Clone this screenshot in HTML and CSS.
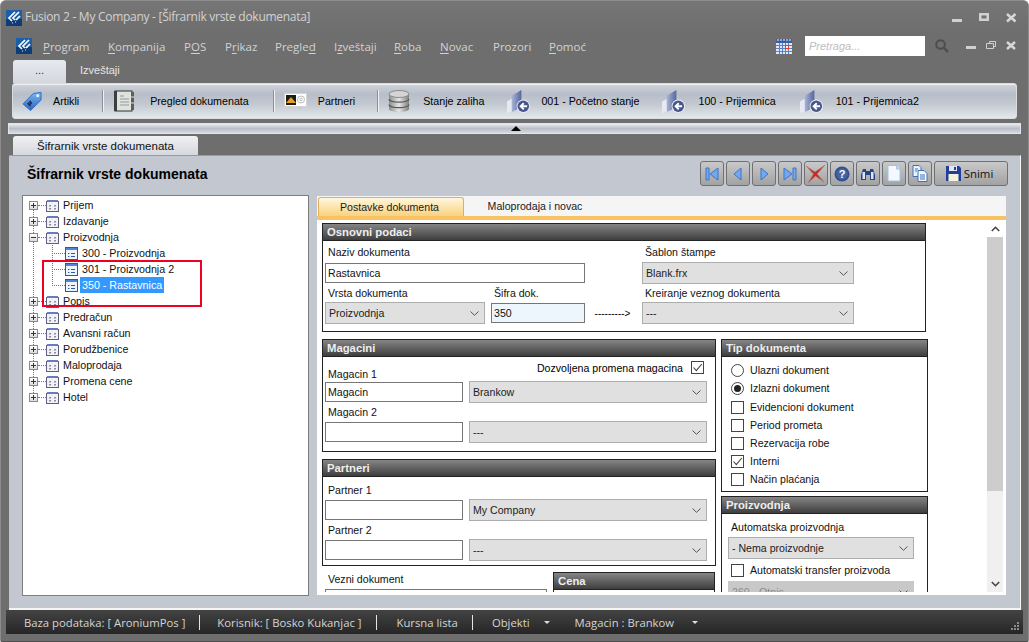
FILE: index.html
```html
<!DOCTYPE html>
<html lang="sr">
<head>
<meta charset="utf-8">
<title>Fusion 2</title>
<link rel="stylesheet" href="styles.css">
</head>
<body>
<svg class="defs" width="0" height="0" aria-hidden="true">
  <defs>
    <linearGradient id="gBlue" x1="0" y1="0" x2="0" y2="1"><stop offset="0" stop-color="#7db4ef"/><stop offset="1" stop-color="#2c66c0"/></linearGradient>
    <linearGradient id="gFold" x1="0" y1="0" x2="1" y2="0"><stop offset="0" stop-color="#a9b3d6"/><stop offset="1" stop-color="#56669c"/></linearGradient>
    <linearGradient id="gDb" x1="0" y1="0" x2="1" y2="0"><stop offset="0" stop-color="#8d8d8d"/><stop offset=".5" stop-color="#e6e6e6"/><stop offset="1" stop-color="#7d7d7d"/></linearGradient>
    <symbol id="logo" viewBox="0 0 16 16">
      <rect width="16" height="16" fill="#1c5fa8"/><rect y="9" width="16" height="7" fill="#0d3c78"/>
      <path d="M9 2 3 8l3 3M13 2 7 8l2 2M14 6l-4 4" fill="none" stroke="#fff" stroke-width="1.7"/>
      <path d="M6 13h1M9 12h1M11 9h1" stroke="#dfeaf7" stroke-width="1.2"/>
    </symbol>
    <symbol id="folder" viewBox="0 0 24 26">
      <path d="M0 13 5 10V24L0 25Z" fill="#e6e9f2"/><path d="M5 7 15 1V19L5 24Z" fill="url(#gFold)"/>
      <circle cx="17" cy="18" r="7" fill="#e8ebf3"/><circle cx="17" cy="18" r="6" fill="#47568c"/>
      <path d="M21 18h-6M17.500 14.800 14.200 18l3.300 3.200" fill="none" stroke="#fff" stroke-width="2"/>
    </symbol>
    <symbol id="treefolder" viewBox="0 0 13 13">
      <rect x=".5" y="2.500" width="12" height="10" fill="#f1f2f6" stroke="#5c5f80"/>
      <path d="M1 1h11v2H1z" fill="#6a7cc0"/>
      <path d="M3 6h2v1.400H3zM8 6h2v1.400H8zM3 9h2v1.400H3zM8 9h2v1.400H8z" fill="#8b8ea6"/>
    </symbol>
    <symbol id="treedoc" viewBox="0 0 13 13">
      <rect x=".5" y=".5" width="12" height="12" fill="#eef4fc" stroke="#2a59a8"/>
      <path d="M1 1h11v2H1z" fill="#4f86d4"/>
      <path d="M3 6h1.400v1H3zM3 9h1.400v1H3zM6 6h4v1H6zM6 9h4v1H6z" fill="#2a59a8"/>
    </symbol>
    <symbol id="chev" viewBox="0 0 9 5"><path d="M.5.5 4.500 4.300 8.500.5" fill="none" stroke="#555" stroke-width="1"/></symbol>
    <symbol id="tick" viewBox="0 0 13 13"><path d="M2.500 6.500 5.300 9.600 10.800 3" fill="none" stroke="#444" stroke-width="1.100"/></symbol>
  </defs>
</svg>

<div class="window">
  <header class="titlebar">
    <svg class="logo"><use href="#logo"/></svg>
    <span class="title-text">Fusion 2 - My Company - [Šifrarnik vrste dokumenata]</span>
    <div class="winbtns">
      <svg width="11" height="10" viewBox="0 0 11 10"><rect x="0" y="6" width="10" height="3" fill="#d0d0d0"/></svg>
      <svg width="11" height="10" viewBox="0 0 11 10"><path d="M0 0h10v8H0zM2.500 2.500v3h5v-3z" fill="#d0d0d0" fill-rule="evenodd"/></svg>
      <svg width="11" height="10" viewBox="0 0 11 10"><path d="M1 1 9.500 8.500M9.500 1 1 8.500" stroke="#d8d8d8" stroke-width="2.400"/></svg>
    </div>
  </header>

  <nav class="menubar">
    <svg class="logo"><use href="#logo"/></svg>
    <span class="m m-program"><u>P</u>rogram</span>
    <span class="m m-komp"><u>K</u>ompanija</span>
    <span class="m m-pos">P<u>O</u>S</span>
    <span class="m m-prikaz">P<u>r</u>ikaz</span>
    <span class="m m-pregled">Pregle<u>d</u></span>
    <span class="m m-izv">I<u>z</u>veštaji</span>
    <span class="m m-roba"><u>R</u>oba</span>
    <span class="m m-novac"><u>N</u>ovac</span>
    <span class="m m-prozori">Prozori</span>
    <span class="m m-pomoc"><u>P</u>omoć</span>
    <svg class="calendar" width="16" height="15" viewBox="0 0 16 15">
      <rect x="0" y="1" width="16" height="14" fill="#dfe8f8"/>
      <rect x="0" y="0" width="16" height="4" fill="#3c5ea8"/>
      <path d="M2 0v2M5 0v2M8 0v2M11 0v2M14 0v2" stroke="#e8eefa"/>
      <path d="M0 6.500h16M0 9.500h16M0 12.500h16M3.500 4v11M6.500 4v11M9.500 4v11M12.500 4v11" stroke="#5d7fc4"/>
      <rect x="9.500" y="6.500" width="3" height="3" fill="#fff" stroke="#e0401c"/>
    </svg>
    <div class="search">Pretraga...</div>
    <svg class="searchico" width="14" height="14" viewBox="0 0 14 14"><circle cx="5.500" cy="5.500" r="4.300" fill="none" stroke="#4d4d4d" stroke-width="2"/><path d="M9 9 13 13" stroke="#4d4d4d" stroke-width="2.400"/></svg>
    <div class="mdibtns">
      <svg width="10" height="10" viewBox="0 0 10 10"><rect x="0" y="5" width="10" height="3" fill="#d0d0d0"/></svg>
      <svg width="10" height="10" viewBox="0 0 10 10"><path d="M3.500 2.500V.5h6v5h-2M.5 2.500h7v5h-7z" fill="none" stroke="#d0d0d0"/></svg>
      <svg width="10" height="10" viewBox="0 0 10 10"><path d="M1 1 9 8M9 1 1 8" stroke="#d8d8d8" stroke-width="2.400"/></svg>
    </div>
  </nav>

  <div class="ribbontabs">
    <div class="rtab">...</div>
    <div class="rtab-plain">Izveštaji</div>
  </div>

  <div class="toolbar">
    <div class="ti ti-a">
      <svg width="20" height="21" viewBox="0 0 21 21"><path d="M1 13 12 2 20 1 20 9 9 20Z" fill="url(#gBlue)" stroke="#2f6ac4" stroke-linejoin="round"/><circle cx="16.500" cy="4.500" r="1.500" fill="#dff"/><path d="M6 12l3 3M8 10l2 3" stroke="#17305e" stroke-width="2"/></svg>
      <span>Artikli</span>
    </div>
    <i class="sep"></i>
    <div class="ti ti-b">
      <svg width="22" height="22" viewBox="0 0 22 22"><rect x="2" y="1" width="17" height="20" fill="#dfe3dd" stroke="#333"/><rect x="1" y="1" width="3" height="20" fill="#3e3e3e"/><path d="M7 6h4M7 9h9M7 12h9M7 15h9" stroke="#999"/><rect x="18" y="2" width="3" height="18" fill="#5e5e5e"/><path d="M18 7h3M18 13h3" stroke="#ddd"/></svg>
      <span>Pregled dokumenata</span>
    </div>
    <i class="sep"></i>
    <div class="ti ti-c">
      <svg width="23" height="18" viewBox="0 0 23 18"><rect x=".5" y="1.500" width="22" height="13" fill="#fff" stroke="#d5d5d5"/><rect x="2" y="3" width="10" height="10" fill="#1c1c1c"/><path d="M2 11 7 5 12 11Z" fill="#e8a020"/><rect x="4" y="14" width="3" height="3" fill="#ccc"/><rect x="15" y="14" width="3" height="3" fill="#ccc"/><circle cx="17" cy="7.500" r="3.500" fill="none" stroke="#bcbcbc"/><circle cx="17" cy="7.500" r="1.300" fill="none" stroke="#bcbcbc"/></svg>
      <span>Partneri</span>
    </div>
    <i class="sep"></i>
    <div class="ti ti-d">
      <svg width="22" height="22" viewBox="0 0 22 22"><path d="M1 4v15c0 1.600 4.500 3 10 3s10-1.400 10-3V4Z" fill="url(#gDb)"/><ellipse cx="11" cy="4" rx="10" ry="3.500" fill="#d4d4d4" stroke="#8a8a8a"/><path d="M1 9c0 1.800 4.500 3.200 10 3.200S21 10.800 21 9M1 14.500c0 1.800 4.500 3.200 10 3.200s10-1.400 10-3.200" fill="none" stroke="#555" stroke-width="1.200"/></svg>
      <span>Stanje zaliha</span>
    </div>
    <div class="ti ti-e"><svg width="23" height="25"><use href="#folder"/></svg><span>001 - Početno stanje</span></div>
    <div class="ti ti-f"><svg width="23" height="25"><use href="#folder"/></svg><span>100 - Prijemnica</span></div>
    <div class="ti ti-g"><svg width="23" height="25"><use href="#folder"/></svg><span>101 - Prijemnica2</span></div>
  </div>

  <div class="splitter"><i class="tri"></i></div>

  <div class="doctabs"><div class="doctab">Šifrarnik vrste dokumenata</div></div>

  <main class="panel">
    <div class="panelhead">
      <h1>Šifrarnik vrste dokumenata</h1>
      <div class="actions">
        <button class="ab"><svg width="16" height="16" viewBox="0 0 16 16"><path d="M2 2h3v12H2zM14 2v12L6 8Z" fill="#74a8ee" stroke="#3a74cc"/></svg></button>
        <button class="ab"><svg width="16" height="16" viewBox="0 0 16 16"><path d="M11 2v12L4 8Z" fill="#74a8ee" stroke="#3a74cc"/></svg></button>
        <button class="ab"><svg width="16" height="16" viewBox="0 0 16 16"><path d="M5 2v12l7-6Z" fill="#74a8ee" stroke="#3a74cc"/></svg></button>
        <button class="ab"><svg width="16" height="16" viewBox="0 0 16 16"><path d="M11 2h3v12h-3zM2 2v12l8-6Z" fill="#74a8ee" stroke="#3a74cc"/></svg></button>
        <button class="ab"><svg width="22" height="20" viewBox="0 0 22 20"><path d="M1 2 10 8 20 1 12 10 19 18 10.500 12 3 19 8.500 10Z" fill="#c9281e" stroke="#a9786e" stroke-width=".6"/></svg></button>
        <button class="ab"><svg width="16" height="16" viewBox="0 0 16 16"><circle cx="8" cy="8" r="7.500" fill="#2f4f8f"/><circle cx="8" cy="8" r="5.800" fill="#45639f"/><text x="8" y="12" text-anchor="middle" class="qmark">?</text></svg></button>
        <button class="ab"><svg width="16" height="16" viewBox="0 0 16 16"><path d="M1 9 3 3h3v11H1ZM15 9 13 3h-3v11h5Z" fill="#28437f"/><path d="M6 5h4v4H6z" fill="#28437f"/><path d="M2.500 6h2.500v7H2.500ZM11 6h2.500v7H11Z" fill="#dbe8fa"/></svg></button>
        <button class="ab"><svg width="14" height="17" viewBox="0 0 14 17"><path d="M1 .5h8.500L13 4v12H1Z" fill="#f5f9ff" stroke="#9cc3ee"/><path d="M9.500.5V4H13" fill="#cfe2f8" stroke="#9cc3ee"/></svg></button>
        <button class="ab"><svg width="16" height="17" viewBox="0 0 16 17"><path d="M1 .5h6l2 2v9H1Z" fill="#e9f2fd" stroke="#3f70b8"/><path d="M6 5.500h6l3 3v8H6Z" fill="#f4f8fe" stroke="#3f70b8"/><path d="M8 10h5M8 12h5M8 14h5M3 4h3M3 6h2" stroke="#3f70b8"/></svg></button>
        <button class="ab ab-save"><svg width="15" height="15" viewBox="0 0 15 15"><path d="M0 0h13l2 2v13H0Z" fill="#1f3f9a"/><rect x="3" y="0" width="8" height="5" fill="#e6e6f2"/><rect x="8" y="1" width="2" height="3" fill="#1f3f9a"/><rect x="2.500" y="8" width="10" height="7" fill="#f7f3d8"/></svg><span>Snimi</span></button>
      </div>
    </div>

    <div class="panelbody">
      <div class="tree">
        <i class="vline v-main"></i>
        <i class="vline v-child"></i>
        <div class="tr"><i class="exp plus"></i><i class="dots"></i><svg class="tico"><use href="#treefolder"/></svg><span>Prijem</span></div>
        <div class="tr"><i class="exp plus"></i><i class="dots"></i><svg class="tico"><use href="#treefolder"/></svg><span>Izdavanje</span></div>
        <div class="tr"><i class="exp"></i><i class="dots"></i><svg class="tico"><use href="#treefolder"/></svg><span>Proizvodnja</span></div>
        <div class="tr child"><i class="dots"></i><svg class="tico"><use href="#treedoc"/></svg><span>300 - Proizvodnja</span></div>
        <div class="tr child"><i class="dots"></i><svg class="tico"><use href="#treedoc"/></svg><span>301 - Proizvodnja 2</span></div>
        <div class="tr child"><i class="dots"></i><svg class="tico"><use href="#treedoc"/></svg><span class="selected">350 - Rastavnica</span></div>
        <div class="tr"><i class="exp plus"></i><i class="dots"></i><svg class="tico"><use href="#treefolder"/></svg><span>Popis</span></div>
        <div class="tr"><i class="exp plus"></i><i class="dots"></i><svg class="tico"><use href="#treefolder"/></svg><span>Predračun</span></div>
        <div class="tr"><i class="exp plus"></i><i class="dots"></i><svg class="tico"><use href="#treefolder"/></svg><span>Avansni račun</span></div>
        <div class="tr"><i class="exp plus"></i><i class="dots"></i><svg class="tico"><use href="#treefolder"/></svg><span>Porudžbenice</span></div>
        <div class="tr"><i class="exp plus"></i><i class="dots"></i><svg class="tico"><use href="#treefolder"/></svg><span>Maloprodaja</span></div>
        <div class="tr"><i class="exp plus"></i><i class="dots"></i><svg class="tico"><use href="#treefolder"/></svg><span>Promena cene</span></div>
        <div class="tr"><i class="exp plus"></i><i class="dots"></i><svg class="tico"><use href="#treefolder"/></svg><span>Hotel</span></div>
        <div class="redbox"></div>
      </div>

      <section class="editor">
        <div class="etabs">
          <div class="etab active">Postavke dokumenta</div>
          <div class="etab">Maloprodaja i novac</div>
        </div>
        <div class="econtent">
          <div class="form">
            <div class="group g-osnovni">
              <div class="ghead">Osnovni podaci</div>
              <div class="osn-grid">
                <label class="lab span3">Naziv dokumenta</label>
                <label class="lab c5">Šablon štampe</label>
                <div class="field span3 w260">Rastavnica</div>
                <div class="sel c5">Blank.frx<svg class="chev"><use href="#chev"/></svg></div>
                <label class="lab">Vrsta dokumenta</label>
                <label class="lab c3">Šifra dok.</label>
                <label class="lab c5">Kreiranje veznog dokumenta</label>
                <div class="sel">Proizvodnja<svg class="chev"><use href="#chev"/></svg></div>
                <div class="field c3 tint">350</div>
                <div class="arrow c4">---------&gt;</div>
                <div class="sel c5">---<svg class="chev"><use href="#chev"/></svg></div>
              </div>
            </div>

            <div class="cols">
              <div class="col-left">
                <div class="group g-mag">
                  <div class="ghead">Magacini</div>
                  <div class="pair-grid mag-grid">
                    <label class="lab end">Magacin 1</label>
                    <div class="flag"><span>Dozvoljena promena magacina</span><i class="cb checked"><svg width="13" height="13"><use href="#tick"/></svg></i></div>
                    <div class="field">Magacin</div>
                    <div class="sel">Brankow<svg class="chev"><use href="#chev"/></svg></div>
                    <label class="lab full">Magacin 2</label>
                    <div class="field"></div>
                    <div class="sel">---<svg class="chev"><use href="#chev"/></svg></div>
                  </div>
                </div>
                <div class="group g-part">
                  <div class="ghead">Partneri</div>
                  <div class="pair-grid part-grid">
                    <label class="lab full first">Partner 1</label>
                    <div class="field"></div>
                    <div class="sel">My Company<svg class="chev"><use href="#chev"/></svg></div>
                    <label class="lab full">Partner 2</label>
                    <div class="field"></div>
                    <div class="sel">---<svg class="chev"><use href="#chev"/></svg></div>
                  </div>
                </div>
                <div class="bottomrow">
                  <div class="vezni">
                    <label class="lab">Vezni dokument</label>
                    <div class="field w222"></div>
                  </div>
                  <div class="group g-cena"><div class="ghead">Cena</div></div>
                </div>
              </div>

              <div class="col-right">
                <div class="group g-tip">
                  <div class="ghead">Tip dokumenta</div>
                  <div class="opts">
                    <div class="opt"><i class="rb"></i><span>Ulazni dokument</span></div>
                    <div class="opt radio-last"><i class="rb on"></i><span>Izlazni dokument</span></div>
                    <div class="opt"><i class="cb"></i><span>Evidencioni dokument</span></div>
                    <div class="opt"><i class="cb"></i><span>Period prometa</span></div>
                    <div class="opt"><i class="cb"></i><span>Rezervacija robe</span></div>
                    <div class="opt"><i class="cb checked"><svg width="13" height="13"><use href="#tick"/></svg></i><span>Interni</span></div>
                    <div class="opt"><i class="cb"></i><span>Način plaćanja</span></div>
                  </div>
                </div>
                <div class="group g-proiz">
                  <div class="ghead">Proizvodnja</div>
                  <div class="proiz-body">
                    <label class="lab auto">Automatska proizvodnja</label>
                    <div class="sel w186">- Nema proizvodnje<svg class="chev"><use href="#chev"/></svg></div>
                    <div class="opt o-auto"><i class="cb"></i><span>Automatski transfer proizvoda</span></div>
                    <div class="sel w186 disabled">260 - Otpis<svg class="chev"><use href="#chev"/></svg></div>
                  </div>
                </div>
              </div>
            </div>
          </div>
          <div class="scroll">
            <div class="sbtn"><svg width="9" height="6" viewBox="0 0 9 6"><path d="M.8 5 4.500 1.300 8.200 5" fill="none" stroke="#444" stroke-width="1.600"/></svg></div>
            <div class="sthumb"></div>
            <div class="strack"></div>
            <div class="sbtn"><svg width="9" height="6" viewBox="0 0 9 6"><path d="M.8 1 4.500 4.700 8.200 1" fill="none" stroke="#444" stroke-width="1.600"/></svg></div>
          </div>
        </div>
      </section>
    </div>
  </main>

  <footer class="statusbar">
    <span class="s s1">Baza podataka: [ AroniumPos ]</span><i class="ssep"></i>
    <span class="s s2">Korisnik: [ Bosko Kukanjac ]</span><i class="ssep"></i>
    <span class="s s3">Kursna lista</span><i class="ssep"></i>
    <span class="s s4">Objekti</span><i class="darr d1"></i>
    <span class="s s5">Magacin : Brankow</span><i class="darr d2"></i>
    <svg class="grip" width="12" height="12" viewBox="0 0 12 12"><path d="M9 1h2v2H9zM6 4h2v2H6zM9 4h2v2H9zM3 7h2v2H3zM6 7h2v2H6zM9 7h2v2H9z" fill="#8a8a8a"/></svg>
  </footer>
</div>
</body>
</html>
```
FILE: styles.css
```css
* { box-sizing: border-box; }
html, body { margin: 0; padding: 0; height: 100%; background: #fff; overflow: hidden; }
.defs { position: absolute; }
i { display: block; font-style: normal; }
label { display: block; }

.window {
  width: 1029px; height: 642px;
  background: #6e6e6e;
  border: 1px solid #8c8c8c;
  border-bottom-color: #4e4e4e;
  border-radius: 6px 6px 2px 2px;
  display: flex; flex-direction: column;
  font-family: "Liberation Sans", Arial, sans-serif;
  font-size: 10.6px;
  color: #000;
  overflow: hidden;
}

/* title bar */
.titlebar { height: 31px; display: flex; align-items: center; padding: 2px 0 0 5px; background: linear-gradient(#767676, #6e6e6e); flex: none; }
.logo { width: 16px; height: 16px; flex: none; }
.title-text { margin: -2px 0 0 3px; font: 12px "Open Sans", sans-serif; letter-spacing: -.28px; color: #d2d2d2; }
.winbtns { margin-left: auto; margin-right: 11px; display: flex; gap: 16px; }
.winbtns svg { display: block; }

/* menu */
.menubar { height: 28px; display: flex; align-items: center; padding-left: 15px; flex: none; font: 11.5px "Open Sans", sans-serif; color: #d2d2d2; }
.m { white-space: nowrap; }
.m u { text-underline-offset: 2px; }
.m-program { margin-left: 11px; width: 65px; }
.m-komp { width: 76px; }
.m-pos { width: 41px; }
.m-prikaz { width: 50px; }
.m-pregled { width: 59px; }
.m-izv { width: 60px; }
.m-roba { width: 46px; }
.m-novac { width: 53px; }
.m-prozori { width: 56px; }
.m-pomoc { width: 227px; }
.calendar { flex: none; }
.search { width: 120px; height: 20px; margin-left: 13px; background: #fff; padding: 2px 4px; font: italic 11px "Liberation Sans", sans-serif; color: #bdbdbd; line-height: 16px; }
.searchico { margin-left: 10px; }
.mdibtns { margin-left: 17px; display: flex; gap: 10px; align-items: center; }

/* ribbon tabs */
.ribbontabs { height: 23px; display: flex; align-items: flex-end; padding-left: 12px; flex: none; font-size: 11px; }
.rtab { width: 53px; height: 23px; background: linear-gradient(#e6e9ee, #d4d8de); border-radius: 3px 3px 0 0; text-align: center; line-height: 21px; color: #333; }
.rtab-plain { margin-left: 14px; height: 23px; line-height: 20px; color: #e6e6e6; }

/* toolbar */
.toolbar {
  height: 36px; margin: 0 11px; flex: none;
  border-radius: 3px;
  border: 1px solid #d9dde2;
  background: linear-gradient(#cfd3da 0, #b8bec9 30%, #c3c9d1 60%, #e3e8ea 100%);
  display: flex; align-items: center; padding-left: 9px;
  box-shadow: inset 0 1px 0 #eef0f3;
  font-size: 10.7px;
}
.ti { display: flex; align-items: center; }
.ti svg { flex: none; display: block; }
.ti-a { gap: 11px; margin-right: 23px; }
.ti-b { gap: 15px; margin-right: 24px; }
.ti-c { gap: 11px; margin-right: 22px; }
.ti-d { gap: 13px; margin-right: 23px; }
.ti-e { gap: 11px; margin-right: 23px; }
.ti-f { gap: 13px; margin-right: 24px; }
.ti-g { gap: 13px; }
.sep { width: 1px; height: 22px; background: #8b8f96; box-shadow: 1px 0 0 #eef0f2; margin-right: 10px; }

/* splitter */
.splitter { height: 11px; margin: 4px 7px 0; flex: none; background: linear-gradient(#e8eaee, #b9bec8 50%, #d6dade); border: 1px solid #e2e4e8; display: flex; justify-content: center; align-items: center; }
.tri { width: 0; height: 0; border-left: 5px solid transparent; border-right: 5px solid transparent; border-bottom: 5px solid #000; margin-left: 2px; }

/* doc tabs */
.doctabs { height: 21px; padding: 2px 0 0 12px; flex: none; }
.doctab { width: 185px; height: 19px; background: linear-gradient(#f0f1f3, #d5d8dd); border-radius: 3px 3px 0 0; line-height: 20px; text-align: center; color: #111; font-size: 11.5px; }

/* main panel */
.panel { height: 455px; margin: 0 7px 0 8px; flex: none; background: #c3c7d0; border-top: 1px solid #9a9a9a; border-right: 1px solid #f4f4f4; border-bottom: 2px solid #f4f4f4; display: flex; flex-direction: column; padding-left: 13px; }
.panelhead { height: 39px; display: flex; align-items: flex-start; flex: none; }
h1 { margin: 10px 0 0 5px; font-size: 14px; line-height: 17px; font-weight: bold; color: #000; }
.actions { margin-left: auto; margin-right: 12px; margin-top: 5px; display: flex; gap: 2px; }
.ab { width: 24px; height: 25px; padding: 0; display: flex; align-items: center; justify-content: center; background: linear-gradient(#c9c9c9, #a2a2a2); border: 1px solid #707070; border-radius: 3px; font: 11.4px "Open Sans", sans-serif; color: #111; }
.ab svg { display: block; flex: none; }
.qmark { font: bold 11px "Liberation Sans", sans-serif; fill: #fff; }
.ab-save { width: 74px; gap: 3px; padding-right: 3px; }
.panelbody { display: flex; align-items: flex-start; gap: 8px; }

/* tree */
.tree { position: relative; width: 287px; height: 401px; flex: none; background: #fff; border: 1px solid #7d7d7d; padding: 1px 0 0 6px; font-size: 10.7px; }
.tr { position: relative; height: 16px; display: flex; align-items: center; white-space: nowrap; color: #111; }
.tr > span { margin-left: 3px; padding: 0 1px; }
.tr.child { padding-left: 23px; }
.tr.child > span { margin-left: 2px; padding: 0 2px; line-height: 16px; }
.exp { width: 9px; height: 9px; flex: none; border: 1px solid #8a8a8a; background: linear-gradient(#fff, #dcdcdc); position: relative; }
.exp::before { content: ""; position: absolute; left: 1px; top: 3px; width: 5px; height: 1px; background: #333; }
.exp.plus::after { content: ""; position: absolute; left: 3px; top: 1px; width: 1px; height: 5px; background: #333; }
.dots { width: 8px; flex: none; border-top: 1px dotted #777; }
.child .dots { width: 13px; }
.tico { width: 13px; height: 13px; flex: none; }
.selected { background: #3399ff; color: #fff; }
.vline { position: absolute; width: 0; border-left: 1px dotted #777; }
.v-main { left: 10px; top: 13px; height: 188px; }
.v-child { left: 29px; top: 49px; height: 41px; }
.redbox { position: absolute; left: 19px; top: 64px; width: 160px; height: 47px; border: 2px solid #ee0022; pointer-events: none; }

/* editor */
.editor { width: 689px; height: 399px; margin-top: 1px; background: #fff; flex: none; display: flex; flex-direction: column; }
.etabs { height: 24px; flex: none; background: #f5f5f5; border-bottom: 4px solid #f8c262; display: flex; align-items: flex-end; padding-left: 1px; }
.etab { width: 146px; height: 19px; line-height: 18px; text-align: center; color: #1a1a1a; }
.etab.active { background: linear-gradient(#fff6de, #fad27f); border: 1px solid #e0b060; border-bottom: 0; border-radius: 3px 3px 0 0; padding-right: 3px; }
.etab + .etab { width: 142px; }
.econtent { display: flex; height: 372px; }
.form { width: 670px; height: 372px; overflow: hidden; padding: 3px 0 0 5px; flex: none; }
.scroll { width: 16px; height: 372px; display: flex; flex-direction: column; background: #f0f0f0; flex: none; }
.sbtn { height: 17px; flex: none; display: flex; align-items: center; justify-content: center; background: #fff; }
.scroll .sbtn:last-child { background: #f0f0f0; }
.sthumb { height: 254px; background: #cdcdcd; flex: none; }
.strack { flex: 1; }

/* groups */
.group { border: 1px solid #222; background: #fff; }
.ghead { height: 17px; line-height: 16px; padding-left: 4px; background: linear-gradient(#858585, #3e3e3e); border-bottom: 1px solid #222; font-weight: bold; font-size: 11.3px; color: #eee; }
.g-osnovni { width: 604px; height: 109px; margin-bottom: 7px; }
.osn-grid { display: grid; grid-template-columns: 160px 6px 94px 57px 212px; grid-template-rows: 21px 22px 18px 22px; padding-left: 2px; }
.lab { line-height: 16px; color: #111; white-space: nowrap; padding-left: 3px; align-self: center; }
.span3 { grid-column: 1 / span 3; }
.c3 { grid-column: 3; }
.c4 { grid-column: 4; }
.c5 { grid-column: 5; }
.field { height: 20px; background: #fff; border: 1px solid #767676; line-height: 18px; padding: 0 2px; align-self: center; color: #111; }
.w260 { width: 260px; }
.tint { background: #eef6fd; }
.w222 { width: 222px; }
.sel { position: relative; height: 22px; background: #e0e0e0; border: 1px solid #adadad; line-height: 20px; padding: 0 3px; color: #222; }
.chev { position: absolute; right: 5px; top: 8px; width: 9px; height: 5px; }
.arrow { text-align: center; font-size: 10px; line-height: 24px; padding-right: 2px; letter-spacing: 0; }

.cols { display: flex; gap: 5px; align-items: flex-start; }
.col-left { width: 394px; flex: none; }
.col-right { width: 207px; flex: none; }
.pair-grid { display: grid; grid-template-columns: 138px 238px; column-gap: 6px; padding-left: 2px; }
.full { grid-column: 1 / -1; }
.g-mag { height: 113px; margin-bottom: 7px; }
.mag-grid { grid-template-rows: 24px 22px 18px 22px; }
.end { align-self: end; margin-bottom: -1px; }
.first { align-self: end; margin-bottom: 1px; }
.flag { display: flex; justify-content: flex-end; align-items: flex-start; gap: 8px; padding: 4px 3px 0 0; line-height: 14px; }
.g-part { height: 107px; }
.part-grid { grid-template-rows: 22px 22px 18px 22px; }

.cb { width: 13px; height: 13px; flex: none; border: 1px solid #444; background: #fff; position: relative; }
.cb.checked svg { position: absolute; left: -1px; top: -1px; display: block; }
.rb { width: 13px; height: 13px; flex: none; border: 1px solid #444; border-radius: 50%; background: #fff; position: relative; }
.rb.on::after { content: ""; position: absolute; left: 2px; top: 2px; width: 7px; height: 7px; border-radius: 50%; background: #222; }

.bottomrow { display: flex; align-items: flex-start; gap: 6px; padding-left: 3px; }
.vezni { padding-top: 5px; width: 222px; flex: none; }
.vezni .field { margin-top: 2px; }
.g-cena { width: 162px; margin: 6px 0 0 0; height: 40px; }

.g-tip { height: 153px; margin-bottom: 4px; }
.opts { padding: 4px 0 0 9px; }
.opt { height: 18px; display: flex; align-items: center; gap: 6px; color: #111; white-space: nowrap; }
.radio-last { margin-bottom: 1px; }
.g-proiz { height: 110px; }
.proiz-body { padding: 4px 0 0 6px; }
.auto { padding-left: 3px; line-height: 16px; margin-top: 1px; margin-bottom: 2px; }
.w186 { width: 186px; }
.o-auto { padding-left: 3px; height: 22px; }
.disabled { background: #c8c8c8; border-color: #c8c8c8; color: #8c8c8c; }

/* status bar */
.statusbar { height: 24px; margin: 0 5px; flex: none; background: linear-gradient(#434343, #262626); display: flex; align-items: center; position: relative; font: 11.3px "Open Sans", sans-serif; color: #d4d4d4; white-space: nowrap; }
.s1 { margin-left: 18px; }
.ssep { width: 1px; height: 15px; background: #e4e4e4; }
.s1 + .ssep { margin-left: 14px; }
.s2 { margin-left: 17px; }
.s2 + .ssep { margin-left: 15px; }
.s3 { margin-left: 19px; }
.s3 + .ssep { margin-left: 14px; }
.s4 { margin-left: 19px; }
.darr { width: 0; height: 0; border-left: 3px solid transparent; border-right: 3px solid transparent; border-top: 3px solid #ddd; }
.d1 { margin-left: 14px; }
.s5 { margin-left: 25px; }
.d2 { margin-left: 18px; }
.grip { position: absolute; right: 3px; bottom: 1px; }
```
